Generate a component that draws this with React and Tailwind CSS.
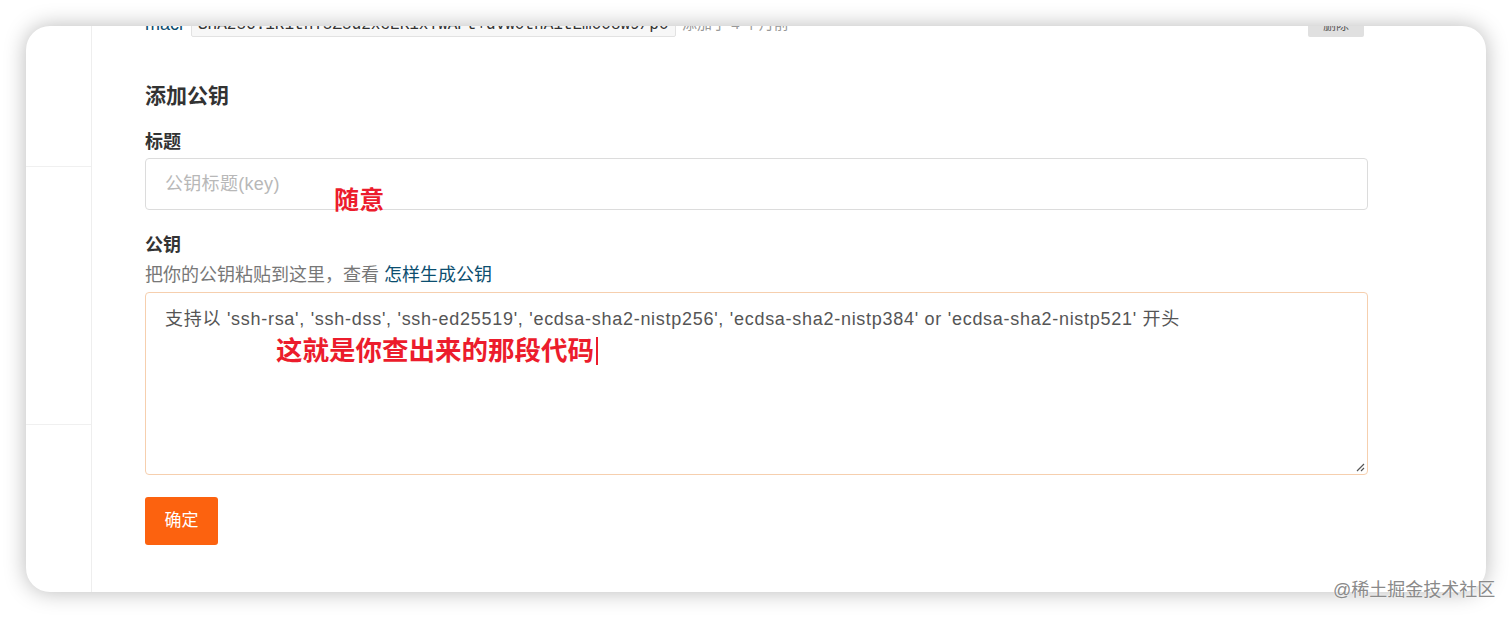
const font = { fontFamily: '"Liberation Sans", "Noto Sans CJK SC", sans-serif' };

export default function App() {
  return (
    <div className="relative h-[619px] w-[1512px] overflow-hidden bg-white pl-[26px] pt-[26px]" style={font}>
      <div className="flex h-[566px] w-[1460px] overflow-hidden rounded-[24px] bg-white shadow-[0_0_22px_rgba(0,0,0,0.28)]">
        {/* sidebar */}
        <div className="flex w-[66px] shrink-0 flex-col border-r border-[#eeeeee]">
          <div className="h-[141px] border-b border-[#f0f0f0]" />
          <div className="h-[258px] border-b border-[#f0f0f0]" />
          <div className="flex-1" />
        </div>

        {/* main */}
        <div className="flex-1 pl-[53px] pr-[118px]">
          <div className="-mt-[14px] flex h-[25px] items-center">
            <span className="text-[18px] text-[#0b4e6f]">maci</span>
            <span className="ml-[8px] flex h-[25px] w-[485px] items-center overflow-hidden whitespace-nowrap rounded-[2px] border border-[#e2e2e2] bg-[#f7f7f7] px-[6px] text-[16px] text-[#333]" style={{ fontFamily: '"Liberation Mono", monospace' }}>
              SHA256:1R1thY5Z5d2xcEK1xYWAPt+dvW0thA1tEm008W9/p0
            </span>
            <span className="ml-[6px] text-[15px] text-[#999]">添加于 4 个月前</span>
            <span className="ml-auto mr-[4px] flex h-[25px] w-[56px] items-center justify-center rounded-[2px] bg-[#e0e0e0] text-[13px] text-[#555]">删除</span>
          </div>

          <div className="mt-[45px] text-[21px] font-semibold leading-[28px] text-[#333]">添加公钥</div>

          <div className="mt-[20px] text-[18px] font-semibold leading-[24px] text-[#333]">标题</div>
          <div className="relative mt-[4px] flex h-[52px] items-center rounded-[4px] border border-[#dcdcdc] px-[19px] text-[18px] tracking-[0.3px] text-[#b8b8b8]">
            公钥标题(key)
            <span className="absolute left-[188px] top-[29px] text-[25px] font-bold leading-none text-[#ec1c2c]">随意</span>
          </div>

          <div className="mt-[23px] text-[18px] font-semibold leading-[24px] text-[#333]">公钥</div>
          <div className="mt-[6px] text-[18px] leading-[24px] text-[#777]">
            把你的公钥粘贴到这里，查看 <span className="text-[#0b4e6f]">怎样生成公钥</span>
          </div>
          <div className="relative mt-[5px] h-[183px] rounded-[4px] border border-[#f6cfae] px-[19px] pt-[15px] text-[18px] leading-[22px] tracking-[0.72px] text-[#555]">
            支持以 'ssh-rsa', 'ssh-dss', 'ssh-ed25519', 'ecdsa-sha2-nistp256', 'ecdsa-sha2-nistp384' or 'ecdsa-sha2-nistp521' 开头
            <div className="mt-[6px] flex items-center pl-[111px] tracking-normal">
              <span className="text-[26.5px] font-bold leading-[30px] text-[#ec1c2c]">这就是你查出来的那段代码</span>
              <span className="ml-[2px] h-[28px] w-[1.5px] bg-[#ec1c2c]" />
            </div>
            <svg className="absolute bottom-[2px] right-[2px]" width="10" height="10" viewBox="0 0 10 10">
              <path d="M9 2 L2 9 M9 6 L6 9" stroke="#555" strokeWidth="1.2" />
            </svg>
          </div>

          <button className="mt-[22px] flex h-[48px] w-[73px] items-center justify-center rounded-[3px] bg-[#fc620f] text-[17px] text-white">
            确定
          </button>
        </div>
      </div>

      <div className="absolute left-[1333px] top-[577px] text-[18px] leading-[26px] text-[#8a8a8a] [text-shadow:0_0_2px_#fff]">
        @稀土掘金技术社区
      </div>
    </div>
  );
}
